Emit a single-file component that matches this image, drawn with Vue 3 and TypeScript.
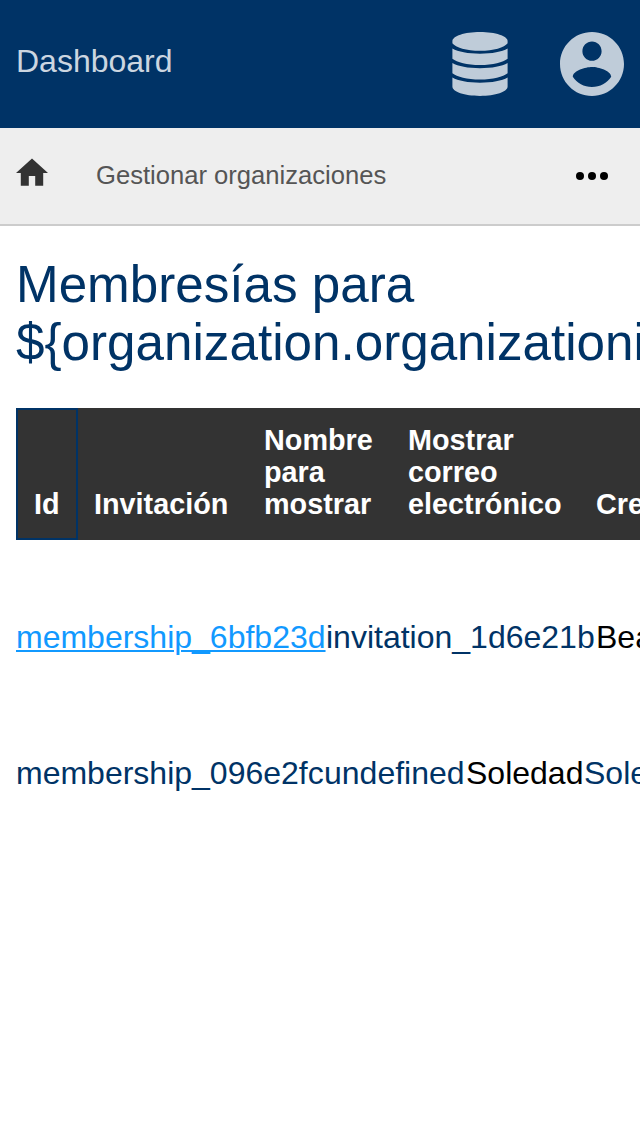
<script setup lang="ts">
interface Column {
  label: string
  width: number
}
interface Cell {
  text: string
  width: number
  kind?: 'link' | 'name'
}
const columns: Column[] = [
  { label: 'Id', width: 62 },
  { label: 'Invitación', width: 170 },
  { label: 'Nombre para mostrar', width: 144 },
  { label: 'Mostrar correo electrónico', width: 188 },
  { label: 'Creado', width: 140 },
]
const rows: Cell[][] = [
  [
    { text: 'membership_6bfb23d', width: 310, kind: 'link' },
    { text: 'invitation_1d6e21b', width: 270 },
    { text: 'Beatriz', width: 100, kind: 'name' },
  ],
  [
    { text: 'membership_096e2fc', width: 308 },
    { text: 'undefined', width: 142 },
    { text: 'Soledad', width: 118, kind: 'name' },
    { text: 'Soledad', width: 118 },
  ],
]
</script>

<template>
  <div class="page">
    <header class="topbar">
      <span class="brand">Dashboard</span>
      <nav class="actions">
        <svg class="database" viewBox="0 0 56 64" aria-label="Database">
          <path d="M.4 9C.4 4.200 12.500 0 28 0S55.600 4.200 55.600 9v2.200C52.500 15.500 41.500 18.800 28 18.800S3.500 15.500.4 11.200z" />
          <path d="M.4 16.500C6 19.800 16 21.700 28 21.700S50 19.800 55.600 16.500V26.800C51 30.500 41 33.100 28 33.100S5 30.500.4 26.800z" />
          <path d="M.4 31C6 34.300 16 36.200 28 36.200S50 34.300 55.600 31V41.300C51 45 41 47.600 28 47.600S5 45 .4 41.300z" />
          <path d="M.4 45.500C6 48.800 16 50.700 28 50.700S50 48.800 55.600 45.500V54.600C55.600 59.800 43.500 64 28 64S.4 59.800.4 54.600z" />
        </svg>
        <svg class="account" viewBox="2 2 20 20" aria-label="Account">
          <path d="M12 2C6.48 2 2 6.48 2 12s4.48 10 10 10 10-4.48 10-10S17.52 2 12 2zm0 3c1.66 0 3 1.34 3 3s-1.34 3-3 3-3-1.34-3-3 1.34-3 3-3zm0 14.2c-2.5 0-4.71-1.28-6-3.22.03-1.99 4-3.08 6-3.08 1.99 0 5.97 1.09 6 3.08-1.29 1.94-3.5 3.22-6 3.22z" />
        </svg>
      </nav>
    </header>
    <nav class="subnav">
      <svg class="home" viewBox="0 0 32 28"><path d="M12.800 27.700v-9.600h6.400v9.600h8V14.900H32L16 .5 0 14.900h4.800v12.800z" /></svg>
      <span class="crumb">Gestionar organizaciones</span>
      <svg class="more" viewBox="0 0 32 8"><circle cx="4" cy="4" r="4" /><circle cx="16" cy="4" r="4" /><circle cx="28" cy="4" r="4" /></svg>
    </nav>
    <main>
      <h1>Membresías para ${organization.organizationid}</h1>
      <div class="heads">
        <div v-for="(column, i) in columns" :key="column.label" class="head" :class="{ selected: i === 0 }" :style="{ width: column.width + 'px' }">{{ column.label }}</div>
      </div>
      <div class="rows">
        <div v-for="(row, r) in rows" :key="r" class="row">
          <span v-for="(cell, c) in row" :key="c" class="cell" :class="cell.kind" :style="{ width: cell.width + 'px' }">{{ cell.text }}</span>
        </div>
      </div>
    </main>
  </div>
</template>

<style>
body { margin: 0; }
</style>
<style scoped>
.page { box-sizing: border-box; width: 100%; height: 1136px; overflow: hidden; background: #fff; color: #003366; font-family: "Liberation Sans", Arial, sans-serif; }
.topbar { box-sizing: border-box; height: 128px; padding: 0 16px; display: flex; align-items: center; justify-content: space-between; background: #003366; color: #bfccd9; }
.brand { font-size: 32px; line-height: 36px; padding-bottom: 6px; color: #ccd6e0; }
.actions { display: flex; gap: 52px; }
.actions svg { height: 64px; fill: #bfccd9; }
.database { width: 56px; }
.account { width: 64px; }
.subnav { box-sizing: border-box; height: 98px; padding: 0 32px 0 16px; display: flex; align-items: center; background: #eee; border-bottom: 2px solid #ccc; }
.home { width: 32px; height: 28px; margin: 0 48px 8px 0; fill: #333; }
.crumb { flex: 1; color: #555; font-size: 25.6px; line-height: 30px; padding-bottom: 2px; }
.more { width: 32px; height: 8px; fill: #000; }
main { padding: 30px 16px 0; }
h1 { margin: 0 0 36px; font-size: 51.2px; line-height: 58px; font-weight: 400; }
.heads { display: flex; width: 704px; height: 132px; background: #333; color: #fff; }
.head { box-sizing: border-box; flex: none; display: flex; align-items: flex-end; padding: 18px 16px; border: 2px solid transparent; font-size: 28.8px; line-height: 32px; font-weight: 700; }
.selected { border-color: #003366; margin-right: -2px; }
.rows { padding-top: 29px; }
.row { display: flex; height: 136px; align-items: center; white-space: nowrap; font-size: 32px; line-height: 36px; }
.cell { flex: none; }
.link { color: #1199ff; text-decoration: underline; text-decoration-thickness: 2px; text-underline-offset: 2px; }
.name { color: #000; }
</style>
